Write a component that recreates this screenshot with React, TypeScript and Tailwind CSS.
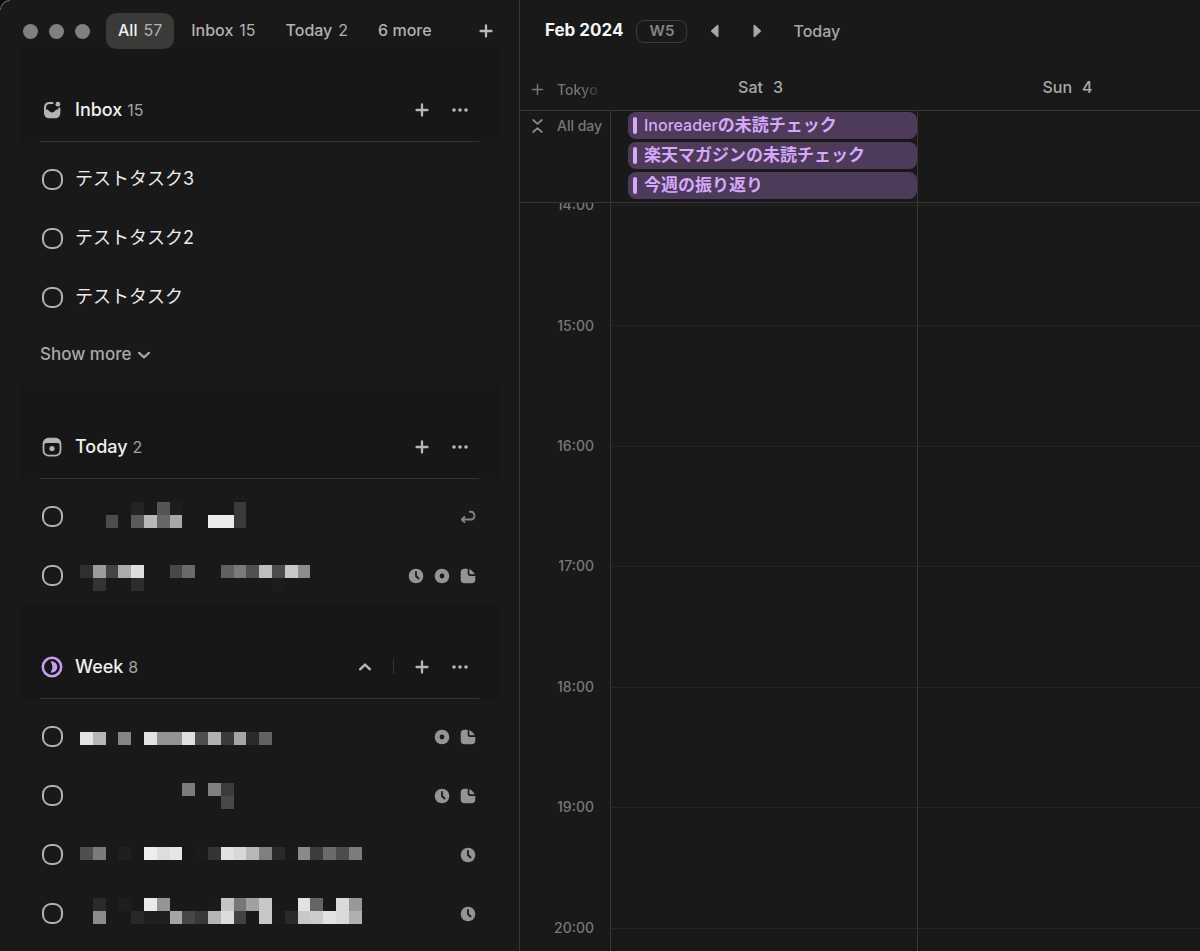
import type { ReactNode } from "react";

type Badge = "repeat" | "clock" | "disc" | "note";

// One pattern per masked title: top offset inside the row, then lines of [column, grey level]
type Mosaic = { top: number; lines: [number, string][][] };

type Task = { id: string; title?: string; mosaic?: Mosaic; badges?: Badge[] };

const inboxTasks: Task[] = [
  { id: "test-3", title: "テストタスク3" },
  { id: "test-2", title: "テストタスク2" },
  { id: "test-1", title: "テストタスク" },
];

const todayTasks: Task[] = [
  {
    id: "today-1",
    badges: ["repeat"],
    mosaic: {
      top: 15,
      lines: [
        [[4, "#242424"], [6, "#555555"], [7, "#1d1d1d"], [12, "#3a3a3a"]],
        [[2, "#4c4c4c"], [4, "#5a5a5a"], [5, "#b8b8b8"], [6, "#666666"], [7, "#a8a8a8"], [10, "#ebebeb"], [11, "#ebebeb"], [12, "#3a3a3a"]],
      ],
    },
  },
  {
    id: "today-2",
    badges: ["clock", "disc", "note"],
    mosaic: {
      top: 19,
      lines: [
        [[0, "#303030"], [1, "#9c9c9c"], [2, "#444444"], [3, "#acacac"], [4, "#dedede"], [7, "#484848"], [8, "#6a6a6a"], [11, "#606060"], [12, "#7a7a7a"], [13, "#505050"], [14, "#bdbdbd"], [15, "#4c4c4c"], [16, "#c8c8c8"], [17, "#8e8c8a"]],
        [[1, "#333333"], [4, "#2d2d30"], [15, "#1c1c1c"]],
      ],
    },
  },
];

const weekTasks: Task[] = [
  {
    id: "week-1",
    badges: ["disc", "note"],
    mosaic: {
      top: 25,
      lines: [
        [[0, "#e3e3e3"], [1, "#b5b5b5"], [2, "#1c1c1c"], [3, "#858585"], [5, "#e2e2e2"], [6, "#939393"], [7, "#939393"], [8, "#e0e0e0"], [9, "#4e4e4e"], [10, "#b2b2b2"], [11, "#3a3a3a"], [12, "#a5a5a5"], [13, "#2a2a2a"], [14, "#626264"]],
      ],
    },
  },
  {
    id: "week-2",
    badges: ["clock", "note"],
    mosaic: {
      top: 17,
      lines: [
        [[8, "#7c7c7c"], [10, "#808080"], [11, "#3c3c3c"]],
        [[11, "#48484a"]],
      ],
    },
  },
  {
    id: "week-3",
    badges: ["clock"],
    mosaic: {
      top: 22,
      lines: [
        [[0, "#4f4f4f"], [1, "#7b7b7b"], [3, "#1f1f1f"], [5, "#ededed"], [6, "#dddddd"], [7, "#e6e6e6"], [9, "#1b1b1b"], [10, "#353535"], [11, "#e2e2e2"], [12, "#d8d8d8"], [13, "#b8b8b8"], [14, "#808080"], [15, "#2a2a2d"], [16, "#1b1b1b"], [17, "#8a8888"], [18, "#3c3c3c"], [19, "#6c6a6d"], [20, "#4c4c4e"], [21, "#7c7c7e"]],
      ],
    },
  },
  {
    id: "week-4",
    badges: ["clock"],
    mosaic: {
      top: 14,
      lines: [
        [[1, "#2a2a2e"], [3, "#1e1e1e"], [5, "#eaeaea"], [6, "#959595"], [10, "#1b1b1b"], [11, "#c5c5c5"], [12, "#77777a"], [13, "#a0a0a0"], [14, "#c8c8c8"], [17, "#e2e2e2"], [18, "#666464"], [20, "#dadada"], [21, "#989898"]],
        [[1, "#8e8c8a"], [4, "#29292c"], [5, "#1f1f1f"], [6, "#1f1f1f"], [7, "#a5a5a5"], [8, "#464648"], [9, "#383839"], [10, "#b5b5b5"], [11, "#dcdcdc"], [12, "#424242"], [14, "#c8c8c8"], [15, "#1b1b1b"], [16, "#2a2a2d"], [17, "#c8c8c8"], [18, "#cccccc"], [19, "#e2e2e2"], [20, "#dadada"], [21, "#b0b0b0"]],
      ],
    },
  },
];

const tabs = [
  { label: "All", count: 57, active: true },
  { label: "Inbox", count: 15 },
  { label: "Today", count: 2 },
  { label: "6 more" },
];

type CalendarEvent = { app?: string; title: string };

const days: { name: string; date: number; events: CalendarEvent[] }[] = [
  {
    name: "Sat",
    date: 3,
    events: [
      { app: "Inoreader", title: "の未読チェック" },
      { title: "楽天マガジンの未読チェック" },
      { title: "今週の振り返り" },
    ],
  },
  { name: "Sun", date: 4, events: [] },
];

const hours = ["14:00", "15:00", "16:00", "17:00", "18:00", "19:00", "20:00"];

const CELL = 12.8;

function MosaicTitle({ mosaic }: { mosaic: Mosaic }) {
  return (
    <svg width="282" height="59" viewBox="0 0 282 59" shapeRendering="crispEdges" aria-hidden="true" className="ml-[5px]">
      {mosaic.lines.map((line, row) =>
        line.map(([col, fill]) => (
          <rect key={`${row}-${col}`} x={col * CELL} y={mosaic.top + row * CELL} width={CELL} height={CELL} fill={fill} />
        ))
      )}
    </svg>
  );
}

function PlusIcon() {
  return (
    <svg width="16" height="16" viewBox="0 0 16 16" fill="none" stroke="currentColor" strokeWidth="2.300" strokeLinecap="round">
      <path d="M8 2.500v11M2.500 8h11" />
    </svg>
  );
}

function DotsIcon() {
  return (
    <svg width="18" height="16" viewBox="0 0 18 16" fill="currentColor">
      <circle cx="3" cy="8" r="1.8" />
      <circle cx="9" cy="8" r="1.8" />
      <circle cx="15" cy="8" r="1.8" />
    </svg>
  );
}

function InboxIcon() {
  return (
    <svg width="22" height="22" viewBox="0 0 22 22" fill="none">
      <path d="M11.600 4H8.800C5.700 4 4 5.700 4 8.800v3" stroke="#b4b4b4" strokeWidth="2" strokeLinecap="round" />
      <path d="M3 10.600h3.100c.7 0 1.100.4 1.500 1 .8 1.200 1.900 1.800 3.400 1.800s2.600-.6 3.400-1.800c.4-.6.8-1 1.500-1h3.400v2.800c0 3.800-2 5.800-5.700 5.800H8.700C5 19.200 3 17.200 3 13.400z" fill="#b4b4b4" />
      <circle cx="16.900" cy="5.200" r="2.400" fill="#b4b4b4" />
      <path d="M18.300 9.400v2" stroke="#b4b4b4" strokeWidth="2" strokeLinecap="round" />
    </svg>
  );
}

function TodayIcon() {
  return (
    <svg width="22" height="22" viewBox="0 0 22 22" fill="none">
      <rect x="2.500" y="2.700" width="17" height="17" rx="5.200" stroke="#b4b4b4" strokeWidth="1.800" />
      <path d="M2.600 8.600C2.600 4.800 4.600 2 8 2h6c3.400 0 5.400 2.800 5.400 6.600-.8-1.200-2.200-1.700-4-1.700H6.600c-1.800 0-3.200.5-4 1.700z" fill="#b4b4b4" />
      <circle cx="11" cy="12.500" r="2.600" fill="#b4b4b4" />
    </svg>
  );
}

function WeekIcon() {
  return (
    <svg width="22" height="22" viewBox="0 0 22 22" fill="none">
      <circle cx="11" cy="11" r="9.200" stroke="#c99df2" strokeWidth="2.500" />
      <path d="M10.600 5.300a5.700 5.700 0 0 1 0 11.400c-.9 0-1-.5-.5-1.200 1.700-2.800 1.700-6.200 0-9-.5-.7-.4-1.200.5-1.200z" fill="#c99df2" />
    </svg>
  );
}

function BadgeIcon({ badge }: { badge: Badge }) {
  switch (badge) {
    case "repeat":
      return (
        <svg width="16" height="16" viewBox="0 0 16 16" fill="none" stroke="#848484" strokeWidth="1.900" strokeLinecap="round" strokeLinejoin="round">
          <path d="M9.800 2.800h1.200a3.400 3.400 0 0 1 3.400 3.500v.9a3.300 3.300 0 0 1-3.300 3.300H2M4.500 7.900L1.900 10.500l2.600 2.600" />
        </svg>
      );
    case "clock":
      return (
        <svg width="16" height="16" viewBox="0 0 16 16" fill="none">
          <circle cx="8" cy="8" r="7.300" fill="#949494" />
          <path d="M8 3.800V8l2.600 2.500" stroke="#191919" strokeWidth="1.800" strokeLinecap="round" strokeLinejoin="round" />
        </svg>
      );
    case "disc":
      return (
        <svg width="16" height="16" viewBox="0 0 16 16">
          <circle cx="8" cy="8" r="7.300" fill="#949494" />
          <circle cx="8" cy="8" r="2.400" fill="#191919" />
        </svg>
      );
    case "note":
      return (
        <svg width="16" height="16" viewBox="0 0 16 16" fill="#949494">
          <path d="M4.500.700h3.200v4.800c0 1.600.8 2.400 2.400 2.400h5.200v3.400c0 2.700-1.300 4-4 4H4.700c-2.700 0-4-1.300-4-4V4.700c0-2.700 1.300-4 3.800-4z" />
          <path d="M9.300 1.100c1.700.6 4.700 3.400 5.500 5.200h-4.300c-.8 0-1.200-.4-1.200-1.200z" />
        </svg>
      );
  }
}

function TaskRow({ task }: { task: Task }) {
  return (
    <li className="flex h-[59px] items-center pl-[42px] pr-[43px]">
      <input
        id={task.id}
        type="checkbox"
        aria-label={task.title ? undefined : "Hidden task"}
        className="h-[21px] w-[21px] shrink-0 appearance-none rounded-[9px] border-2 border-[#b2b2b2] bg-transparent checked:bg-[#b2b2b2]"
      />
      <label htmlFor={task.id} className="ml-3 flex-1 text-lg leading-6 text-[#ececec]">
        {task.title && <span className="block pb-0.5">{task.title}</span>}
        {task.mosaic && <MosaicTitle mosaic={task.mosaic} />}
      </label>
      <div className="flex items-center gap-[10px]">
        {task.badges?.map((badge) => (
          <BadgeIcon key={badge} badge={badge} />
        ))}
      </div>
    </li>
  );
}

type SectionProps = {
  title: string;
  count: number;
  icon: ReactNode;
  tasks: Task[];
  collapsible?: boolean;
  children?: ReactNode;
};

function TaskSection({ title, count, icon, tasks, collapsible, children }: SectionProps) {
  return (
    <section>
      <div className="mx-5 h-[94px] bg-[#171717] px-5 pt-8">
        <div className="flex h-[62px] items-center border-b border-[#353535] pb-0.5 pl-px text-[#b8b8b8]">
          {icon}
          <h2 className="ml-3 flex-1 text-lg font-medium text-[#efefef]">
            {title} <span className="text-base font-normal text-[#a2a2a2]">{count}</span>
          </h2>
          {collapsible && (
            <>
              <button aria-label={`Collapse ${title}`}>
                <svg width="16" height="16" viewBox="0 0 16 16" fill="none" stroke="currentColor" strokeWidth="2.400" strokeLinecap="round" strokeLinejoin="round">
                  <path d="M3 10.300L8 5.600l5 4.700" />
                </svg>
              </button>
              <div className="mx-5 h-[15px] w-px bg-[#363636]"></div>
            </>
          )}
          <button aria-label={`Add to ${title}`}>
            <PlusIcon />
          </button>
          <button aria-label={`${title} options`} className="ml-[21px] mr-[10px]">
            <DotsIcon />
          </button>
        </div>
      </div>
      <ul className="pt-2">
        {tasks.map((task) => (
          <TaskRow key={task.id} task={task} />
        ))}
      </ul>
      {children}
    </section>
  );
}

function Sidebar() {
  return (
    <aside className="w-[520px] shrink-0 overflow-hidden border-r border-[#363636]">
      <nav className="relative z-10 flex h-[62px] items-center pl-[23px] pr-[25px]">
        <div className="flex gap-[11px]">
          <span className="h-[15px] w-[15px] rounded-full bg-[#808080]"></span>
          <span className="h-[15px] w-[15px] rounded-full bg-[#808080]"></span>
          <span className="h-[15px] w-[15px] rounded-full bg-[#808080]"></span>
        </div>
        <div className="ml-4 flex gap-1">
          {tabs.map((tab) => (
            <button
              key={tab.label}
              className={
                tab.active
                  ? "h-9 rounded-[10px] bg-[#3a3a39] px-3 pb-0.5 text-base font-medium text-[#f0f0f0]"
                  : "h-9 rounded-[10px] px-[13px] pb-0.5 text-base font-medium text-[#b2b2b2]"
              }
            >
              {tab.label}
              {tab.count && <span className="ml-[6px] text-base font-normal text-[#b2b2b2]">{tab.count}</span>}
            </button>
          ))}
        </div>
        <button aria-label="Add list" className="ml-auto text-[#b8b8b8]">
          <PlusIcon />
        </button>
      </nav>

      {/* Section headers start behind the lower edge of the tab bar */}
      <div className="-mt-[14px]">
        <TaskSection title="Inbox" count={15} icon={<InboxIcon />} tasks={inboxTasks}>
          <button className="flex h-[58px] items-center gap-1.5 pb-0.5 pl-10 text-[17px] font-medium text-[#a8a8a8]">
            Show more
            <svg width="14" height="14" viewBox="0 0 14 14" fill="none" stroke="currentColor" strokeWidth="2.200" strokeLinecap="round" strokeLinejoin="round">
              <path d="M2 4.800L7 9.400l5-4.600" />
            </svg>
          </button>
        </TaskSection>
        <TaskSection title="Today" count={2} icon={<TodayIcon />} tasks={todayTasks} />
        <TaskSection title="Week" count={8} icon={<WeekIcon />} tasks={weekTasks} collapsible />
      </div>
    </aside>
  );
}

function Calendar() {
  return (
    <main className="flex min-w-0 flex-1 flex-col overflow-hidden">
      <header className="flex h-[62px] shrink-0 items-center pl-[25px]">
        <h1 className="text-[17px] font-bold text-[#f5f5f5]">Feb 2024</h1>
        <span className="ml-[13px] flex h-[23px] w-[51px] items-center justify-center rounded-lg border border-[#3c3c3c] text-[15px] font-semibold text-[#858585]">
          W5
        </span>
        <button aria-label="Previous week" className="ml-5 text-[#a8a8a8]">
          <svg width="16" height="16" viewBox="0 0 16 16" fill="currentColor">
            <path d="M11.500 2.800v10.400c0 1-.9 1.200-1.600.6L4.300 8.700a1 1 0 0 1 0-1.400l5.600-5.100c.7-.6 1.600-.4 1.600.6z" />
          </svg>
        </button>
        <button aria-label="Next week" className="ml-[26px] text-[#a8a8a8]">
          <svg width="16" height="16" viewBox="0 0 16 16" fill="currentColor">
            <path d="M4.500 2.800v10.400c0 1 .9 1.200 1.600.6l5.600-5.100a1 1 0 0 0 0-1.400L6.100 2.200c-.7-.6-1.600-.4-1.600.6z" />
          </svg>
        </button>
        <button className="ml-7 text-base font-medium text-[#a8a8a8]">Today</button>
      </header>

      <div className="flex h-[49px] shrink-0 border-b border-[#363636]">
        <div className="flex w-[91px] shrink-0 items-center gap-[13px] pl-[11px] pt-[7px] text-[#777777]">
          <button aria-label="Add time zone">
            <svg width="13" height="13" viewBox="0 0 13 13" fill="none" stroke="currentColor" strokeWidth="1.500" strokeLinecap="round">
              <path d="M6.500 1.500v10M1.500 6.500h10" />
            </svg>
          </button>
          <span className="bg-gradient-to-r from-[#777777] from-60% to-[#333333] bg-clip-text text-sm font-medium text-transparent">Tokyo</span>
        </div>
        {days.map((day) => (
          <div key={day.name} className="flex min-w-[307px] flex-1 items-center justify-center gap-[10px] pr-2 pt-0.5 text-base font-medium text-[#a8a8a8]">
            <span>{day.name}</span>
            <span>{day.date}</span>
          </div>
        ))}
      </div>

      <div className="flex h-[92px] shrink-0 border-b border-[#363636]">
        <div className="flex w-[91px] shrink-0 items-start gap-[13px] border-r border-[#363636] pl-[11px] pt-1 text-[#777777]">
          <button aria-label="Collapse all-day events" className="pt-[3px]">
            <svg width="13" height="16" viewBox="0 0 13 16" fill="none" stroke="#8c8c8c" strokeWidth="1.700" strokeLinecap="round" strokeLinejoin="round">
              <path d="M2.200 2L6.500 5.800 10.800 2M2.200 14l4.300-3.800 4.300 3.800" />
            </svg>
          </button>
          <span className="whitespace-nowrap text-sm leading-[22px] font-medium">All day</span>
        </div>
        {days.map((day) => (
          <ul key={day.name} className="flex min-w-[307px] flex-1 flex-col gap-[3px] border-r border-[#363636] pl-[17px] pt-px">
            {day.events.map((event) => (
              <li key={event.title} className="flex h-[27px] items-center gap-[7px] rounded-lg bg-[#4d3b59] pl-[5px]">
                <span className="h-[17px] w-1 rounded-xs bg-[#d6a8fb]"></span>
                <span className="whitespace-nowrap pb-px text-[17px] leading-6 font-bold text-[#d6a8fb]">
                  {event.app && <span className="text-base font-medium">{event.app}</span>}
                  {event.title}
                </span>
              </li>
            ))}
          </ul>
        ))}
      </div>

      <div className="flex flex-1 overflow-hidden">
        <div className="w-[91px] shrink-0 overflow-hidden border-r border-[#363636]">
          {/* Scrolled so that the first hour sits half under the all-day row */}
          <div className="-mt-[58px] flex h-[843px] flex-col">
            {hours.map((hour) => (
              <time key={hour} className="flex flex-1 items-center justify-end pr-4 text-sm font-medium text-[#777777]">
                {hour}
              </time>
            ))}
          </div>
        </div>
        {days.map((day) => (
          <div key={day.name} className="min-w-[307px] flex-1 border-r border-[#363636] pt-[2px]">
            <div className="flex h-[843px] flex-col">
              {hours.map((hour) => (
                <div key={hour} className="flex-1 border-t border-[#252525]"></div>
              ))}
            </div>
          </div>
        ))}
      </div>
    </main>
  );
}

export default function App() {
  return (
    <div className="relative h-screen overflow-hidden bg-[#0c0c0c] font-['Inter','Noto_Sans_CJK_JP',sans-serif]">
      <div className="flex h-full overflow-hidden rounded-tl-[10px] bg-[#191919]">
        <Sidebar />
        <Calendar />
      </div>
      {/* Light catching the window corner */}
      <span className="pointer-events-none absolute left-0 top-0 h-[10px] w-[10px] rounded-tl-[10px] border-l border-t border-[#6a6a6a]"></span>
    </div>
  );
}
